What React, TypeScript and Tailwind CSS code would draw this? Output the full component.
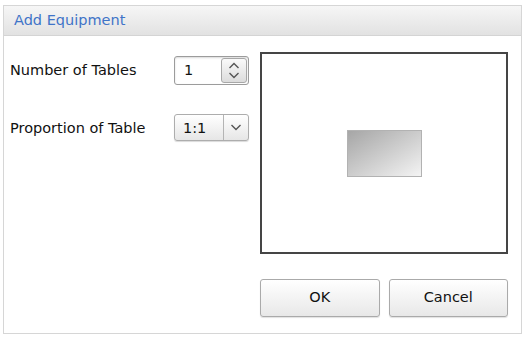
import React from "react";

const font = { fontFamily: '"DejaVu Sans", Verdana, sans-serif' };

function ChevUp() {
  return (
    <svg width="12" height="7" viewBox="0 0 12 7">
      <path d="M1.5 6 L6 1.5 L10.5 6" fill="none" stroke="#555" strokeWidth="1.4" />
    </svg>
  );
}
function ChevDown() {
  return (
    <svg width="12" height="7" viewBox="0 0 12 7">
      <path d="M1.5 1 L6 5.5 L10.5 1" fill="none" stroke="#555" strokeWidth="1.4" />
    </svg>
  );
}

export default function App() {
  return (
    <div className="w-[523px] h-[337px] bg-white pt-[5px] pl-[3px]" style={font}>
      <div className="w-[519px] h-[329px] border border-[#d6d6d6] flex flex-col">
        <div className="h-[30px] shrink-0 bg-gradient-to-b from-[#f6f6f6] to-[#e2e2e2] border-b border-[#d4d4d4] flex items-center pl-[10px] text-[14.5px] text-[#3f74c8]">
          Add Equipment
        </div>
        <div className="flex flex-1">
          <div className="w-[256px] pt-[20px] pl-[6px] text-[14.5px] text-[#111]">
            <div className="flex items-center h-[29px]">
              <div className="w-[164px]">Number of Tables</div>
              <div className="w-[75px] h-[29px] border border-[#9c9c9c] rounded-[3px] bg-white shadow-[inset_0_1px_2px_rgba(0,0,0,0.15)] flex items-center justify-between pl-[9px] pr-[1px]">
                <span>1</span>
                <div className="w-[26px] h-[25px] border border-[#a8a8a8] rounded-[3px] bg-gradient-to-b from-[#fafafa] to-[#dcdcdc] flex flex-col items-center justify-center gap-[3px]">
                  <ChevUp />
                  <ChevDown />
                </div>
              </div>
            </div>
            <div className="flex items-center h-[27px] mt-[29px]">
              <div className="w-[164px] pt-[2px]">Proportion of Table</div>
              <div className="w-[75px] h-[27px] border border-[#adadad] rounded-[3px] bg-gradient-to-b from-white to-[#e6e6e6] flex items-center shadow-[0_1px_1px_rgba(0,0,0,0.15)]">
                <span className="w-[48px] pl-[8px] pt-[2px]">1:1</span>
                <div className="w-px h-[25px] bg-[#b4b4b4]" />
                <div className="flex-1 flex items-center justify-center">
                  <ChevDown />
                </div>
              </div>
            </div>
          </div>
          <div className="w-[248px] pt-[16px]">
            <div className="w-[248px] h-[202px] border-2 border-[#454545] flex items-center justify-center">
              <div className="w-[75px] h-[47px] border border-[#b2b2b2] bg-gradient-to-br from-[#a6a6a6] to-[#f4f4f4]" />
            </div>
            <div className="flex gap-[9px] mt-[25px]">
              <button className="w-[120px] h-[38px] rounded-[3px] border border-[#aaaaaa] bg-gradient-to-b from-white to-[#e8e8e8] text-[14.5px] text-[#111] shadow-[0_1px_1px_rgba(0,0,0,0.12)]">
                OK
              </button>
              <button className="w-[120px] h-[38px] rounded-[3px] border border-[#aaaaaa] bg-gradient-to-b from-white to-[#e8e8e8] text-[14.5px] text-[#111] shadow-[0_1px_1px_rgba(0,0,0,0.12)]">
                Cancel
              </button>
            </div>
          </div>
        </div>
      </div>
    </div>
  );
}
